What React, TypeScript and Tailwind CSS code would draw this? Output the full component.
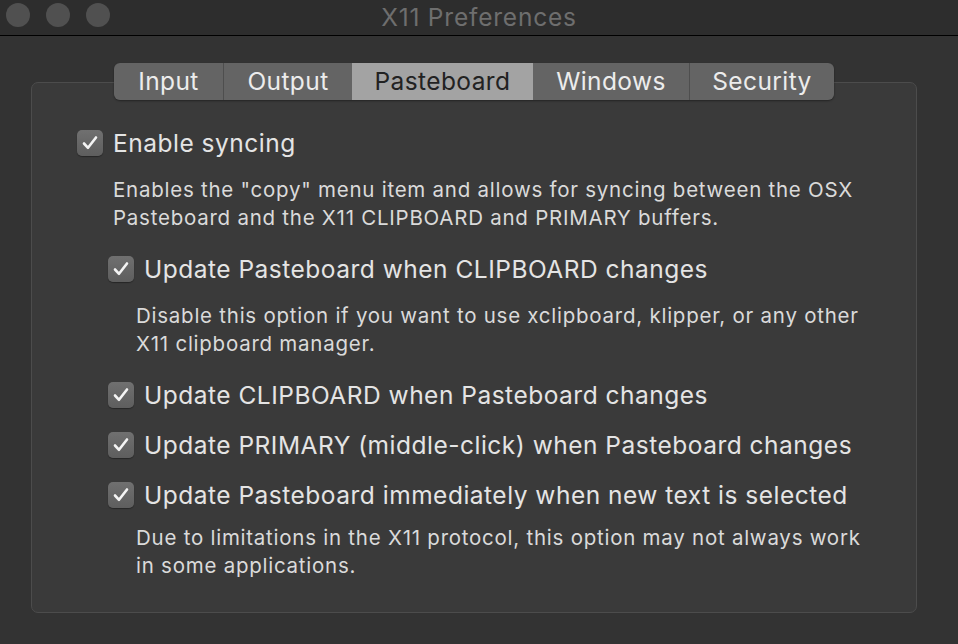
import React from "react";

const tabs = [
  { label: "Input", w: "w-[109px]" },
  { label: "Output", w: "w-[129px]" },
  { label: "Pasteboard", w: "w-[181px]", active: true },
  { label: "Windows", w: "w-[156px]" },
  { label: "Security", w: "w-[145px]" },
];

const CheckBox = () => (
  <span className="flex h-[26px] w-[26px] shrink-0 items-center justify-center rounded-[5px] bg-gradient-to-b from-[#707070] to-[#5e5e5e] shadow-[0_1px_1px_rgba(0,0,0,0.35)]">
    <svg width="20" height="20" viewBox="0 0 20 20" fill="none">
      <path d="M4 10.5l4 4.3L16 4.5" stroke="#f4f4f4" strokeWidth="2.6" strokeLinecap="round" strokeLinejoin="round" />
    </svg>
  </span>
);

const Option = ({ label, className = "" }: { label: string; className?: string }) => (
  <div className={`flex h-[30px] items-center gap-[10px] ${className}`}>
    <CheckBox />
    <span className="text-[24.5px] tracking-[0.5px] text-[#e4e4e4]">{label}</span>
  </div>
);

const Desc = ({ lines, className = "" }: { lines: string[]; className?: string }) => (
  <div className={`text-[20.5px] leading-[28px] tracking-[0.75px] text-[#dadada] ${className}`}>
    {lines.map((l) => (
      <div key={l}>{l}</div>
    ))}
  </div>
);

export default function App() {
  return (
    <div className="flex h-[644px] w-[958px] flex-col overflow-hidden bg-[#333333] font-['Inter','Noto_Sans',sans-serif]">
      {/* title bar */}
      <div className="relative flex h-[36px] shrink-0 items-center justify-center border-b border-black bg-[#2d2d2d]">
        <div className="absolute left-[6px] top-[3px] flex gap-[16px]">
          <span className="h-[24px] w-[24px] rounded-full bg-[#505050]" />
          <span className="h-[24px] w-[24px] rounded-full bg-[#505050]" />
          <span className="h-[24px] w-[24px] rounded-full bg-[#505050]" />
        </div>
        <span className="text-[24.5px] tracking-[0.8px] text-[#6e6e6e]">X11 Preferences</span>
      </div>

      <div className="flex flex-1 flex-col pl-[31px] pt-[27px]">
        {/* tabs */}
        <div className="relative z-10 ml-[83px] flex h-[37px] w-fit overflow-hidden rounded-[6px] shadow-[0_1px_2px_rgba(0,0,0,0.4)]">
          {tabs.map((t, i) => (
            <div
              key={t.label}
              className={`flex items-center justify-center text-[24.5px] tracking-[0.4px] ${t.w} ${
                t.active
                  ? "bg-[#a3a3a3] text-[#222222]"
                  : "bg-[#646464] text-[#ececec]"
              } ${i > 0 && !t.active && !tabs[i - 1].active ? "border-l border-[#4e4e4e]" : ""}`}
            >
              {t.label}
            </div>
          ))}
        </div>

        {/* panel */}
        <div className="-mt-[18px] h-[531px] w-[886px] rounded-[7px] border border-[#4c4c4c] bg-[#3a3a3a] pl-[45px] pt-[45px]">
          <Option label="Enable syncing" />
          <Desc
            className="ml-[36px] mt-[18px]"
            lines={[
              'Enables the "copy" menu item and allows for syncing between the OSX',
              "Pasteboard and the X11 CLIPBOARD and PRIMARY buffers.",
            ]}
          />
          <div className="ml-[31px]">
            <Option className="mt-[22px]" label="Update Pasteboard when CLIPBOARD changes" />
            <Desc
              className="ml-[28px] mt-[18px]"
              lines={[
                "Disable this option if you want to use xclipboard, klipper, or any other",
                "X11 clipboard manager.",
              ]}
            />
            <Option className="mt-[22px]" label="Update CLIPBOARD when Pasteboard changes" />
            <Option className="mt-[20px]" label="Update PRIMARY (middle-click) when Pasteboard changes" />
            <Option className="mt-[20px]" label="Update Pasteboard immediately when new text is selected" />
            <Desc
              className="ml-[28px] mt-[14px]"
              lines={[
                "Due to limitations in the X11 protocol, this option may not always work",
                "in some applications.",
              ]}
            />
          </div>
        </div>
      </div>
    </div>
  );
}
